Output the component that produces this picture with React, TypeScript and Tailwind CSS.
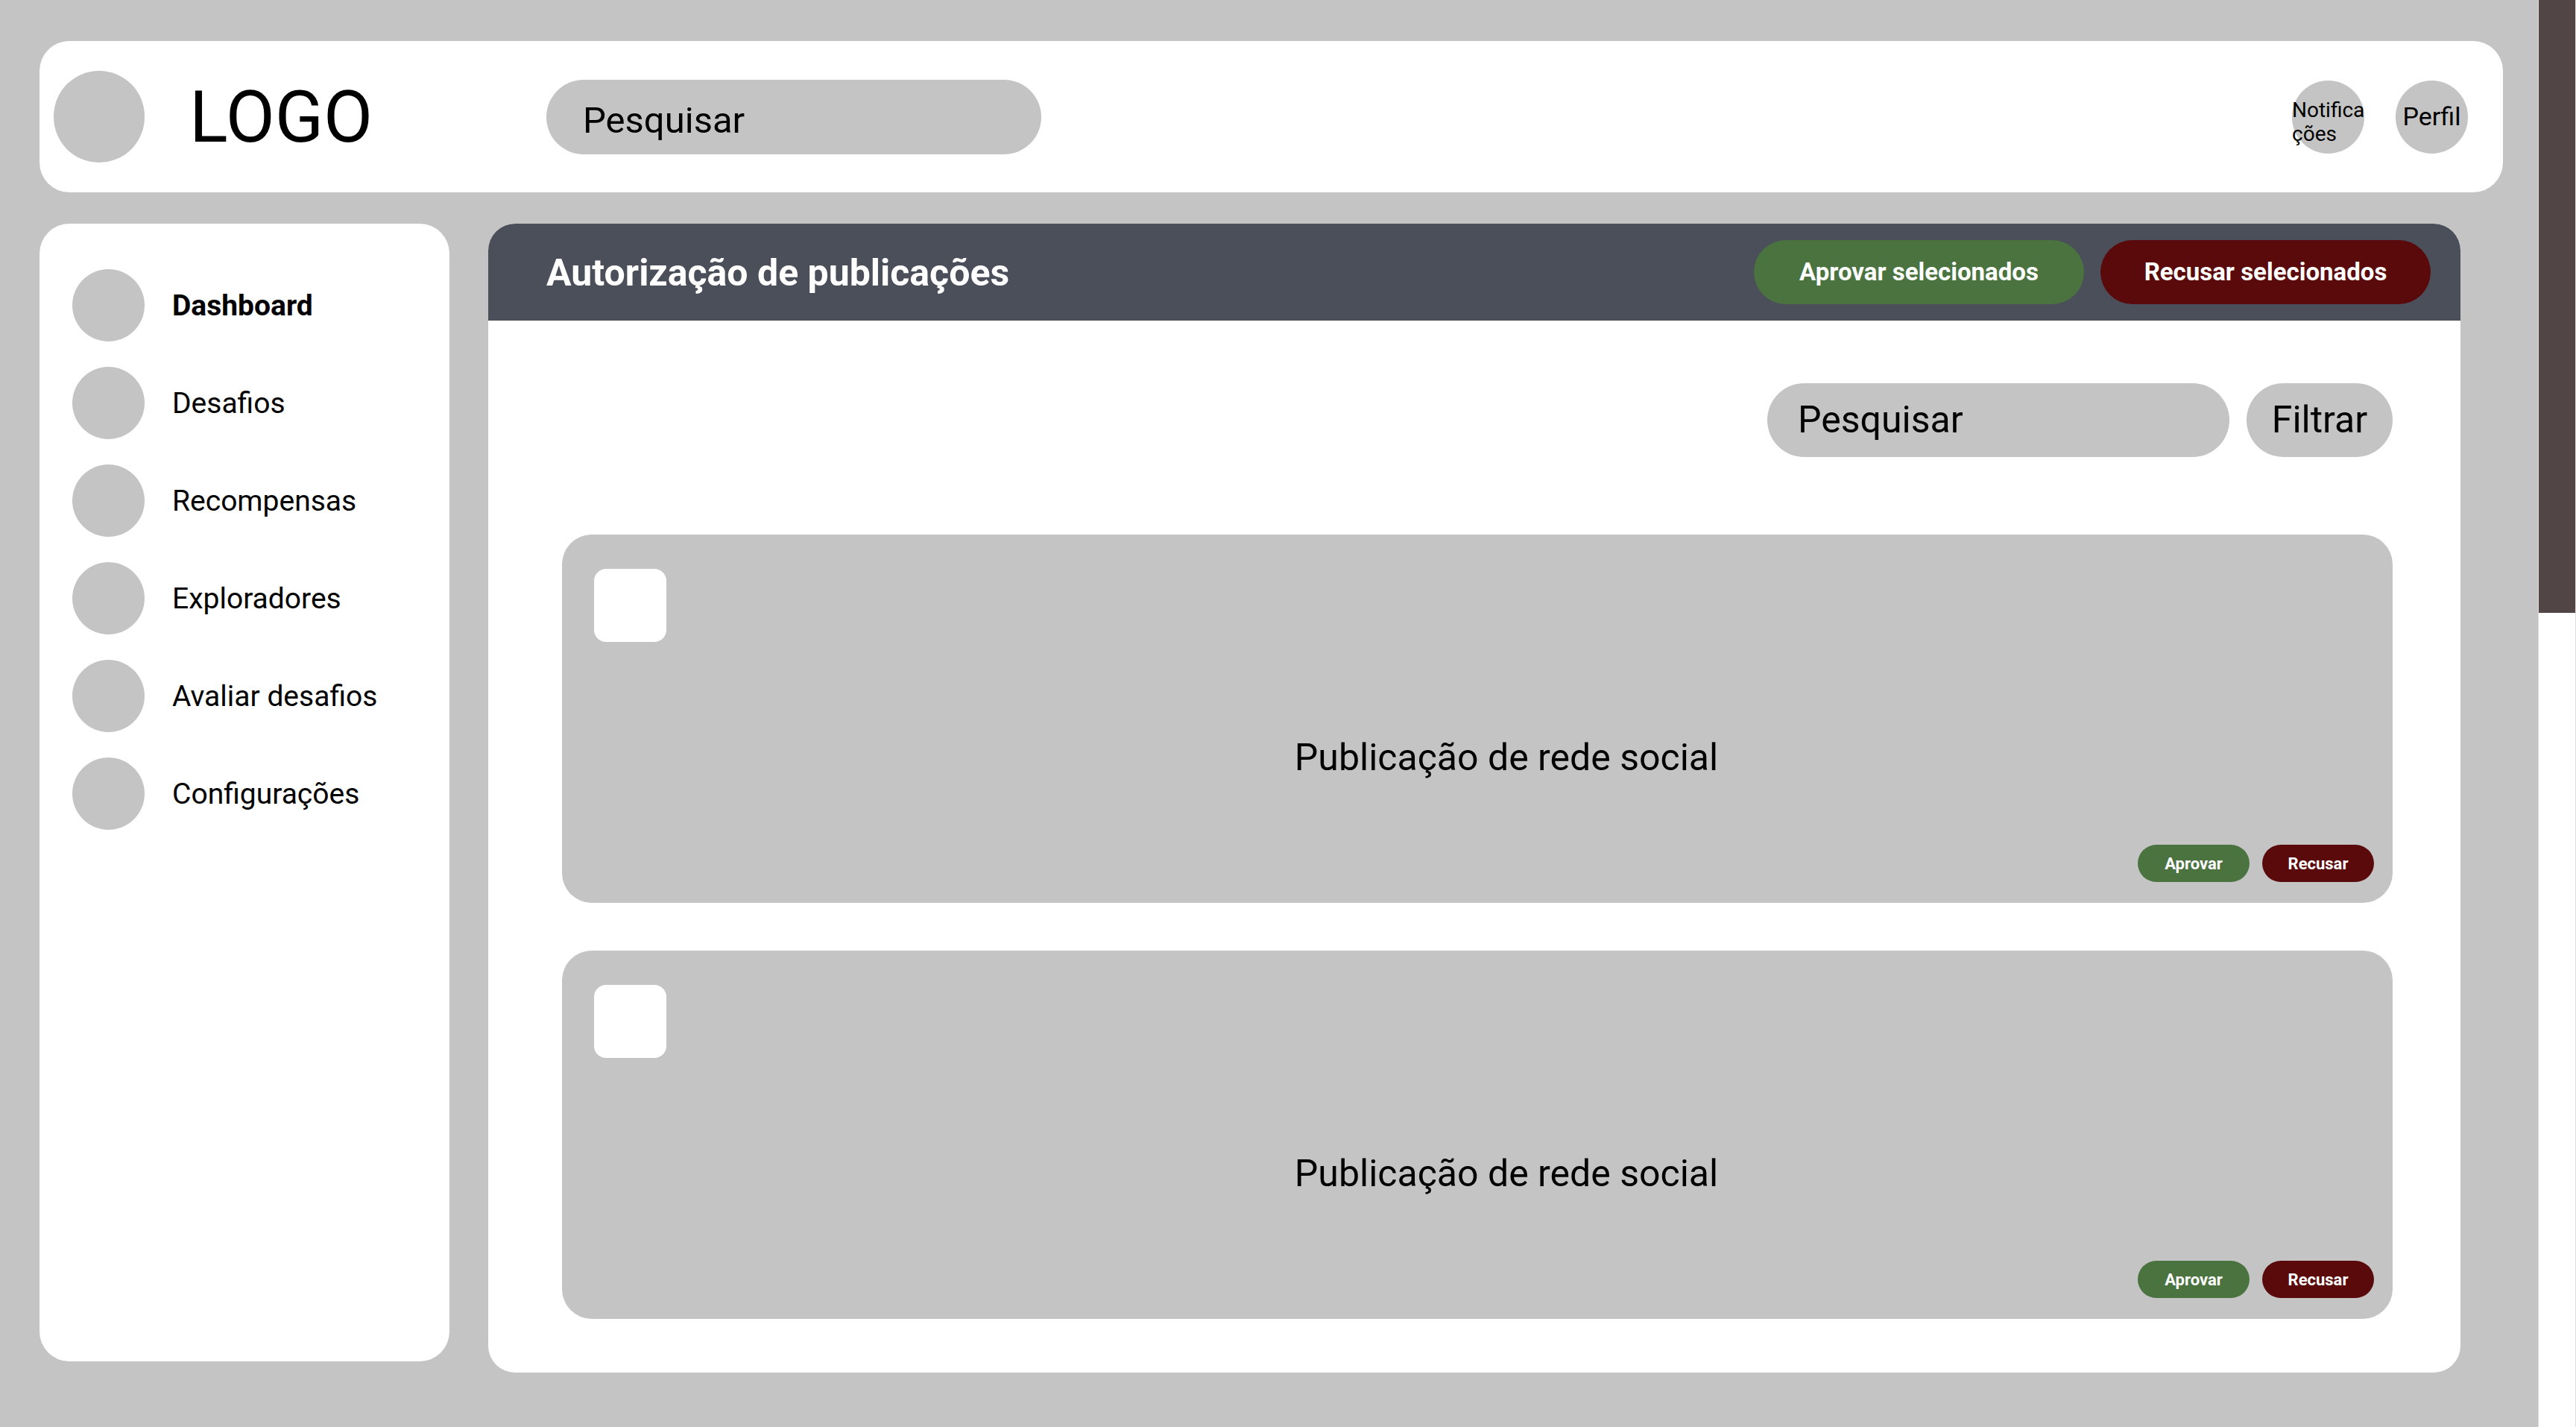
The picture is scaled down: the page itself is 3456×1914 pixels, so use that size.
const menu = [
  { label: "Dashboard", active: true },
  { label: "Desafios" },
  { label: "Recompensas" },
  { label: "Exploradores" },
  { label: "Avaliar desafios" },
  { label: "Configurações" },
];

function PostCard() {
  return (
    <div className="flex h-[494px] flex-col rounded-[40px] bg-[#c4c4c4] pb-[28px] pl-[43px] pr-[25px] pt-[46px]">
      <div className="h-[98px] w-[97px] rounded-[16px] bg-white" />
      <p className="mt-[126px] pl-[60px] text-center text-[50px] leading-[58px] text-black">
        Publicação de rede social
      </p>
      <div className="mt-auto flex justify-end gap-[17px]">
        <button className="h-[50px] w-[150px] rounded-full bg-[#4a7340] text-[22px] font-bold text-white">
          Aprovar
        </button>
        <button className="h-[50px] w-[150px] rounded-full bg-[#5a0a0b] text-[22px] font-bold text-white">
          Recusar
        </button>
      </div>
    </div>
  );
}

export default function App() {
  return (
    <div className="flex h-[1914px] w-[3456px] overflow-hidden bg-[#c4c4c4] font-['Roboto',sans-serif] text-black">
      <div className="flex-1 pl-[53px] pr-[47px] pt-[55px]">
        {/* top bar */}
        <header className="flex h-[203px] items-center rounded-[40px] bg-white pl-[19px] pr-[47px]">
          <div className="h-[123px] w-[122px] rounded-full bg-[#c4c4c4]" />
          <div className="ml-[60px] w-[479px] text-[96px] leading-none">LOGO</div>
          <div className="flex h-[100px] w-[664px] items-center rounded-full bg-[#c4c4c4] pl-[49px] pt-[10px] text-[49px]">
            Pesquisar
          </div>
          <div className="ml-auto flex items-center gap-[42px]">
            <div className="flex h-[98px] w-[97px] flex-col justify-center rounded-full bg-[#c4c4c4] pt-[14px] text-[28px] leading-[32px] whitespace-nowrap">
              <span>Notifica</span>
              <span>ções</span>
            </div>
            <div className="flex h-[98px] w-[97px] items-center justify-center rounded-full bg-[#c4c4c4] text-[34px]">
              Perfil
            </div>
          </div>
        </header>

        <div className="mt-[42px] flex gap-[52px]">
          {/* sidebar */}
          <nav className="flex h-[1526px] w-[550px] flex-col gap-[34px] rounded-[40px] bg-white pl-[44px] pt-[61px]">
            {menu.map((item) => (
              <div key={item.label} className="flex items-center gap-[37px]">
                <div className="h-[97px] w-[97px] rounded-full bg-[#c4c4c4]" />
                <span className={`pt-[2px] text-[39px] ${item.active ? "font-bold" : ""}`}>{item.label}</span>
              </div>
            ))}
          </nav>

          {/* main panel */}
          <section className="h-[1541px] w-[2646px] overflow-hidden rounded-[36px] bg-white">
            <div className="flex h-[130px] items-center justify-between bg-[#4a4f59] pl-[78px] pr-[40px]">
              <h1 className="pt-[2px] text-[50px] font-bold text-white">Autorização de publicações</h1>
              <div className="flex gap-[22px]">
                <button className="h-[86px] w-[443px] rounded-full bg-[#4a7340] text-[33px] font-bold text-white">
                  Aprovar selecionados
                </button>
                <button className="h-[86px] w-[443px] rounded-full bg-[#5a0a0b] text-[33px] font-bold text-white">
                  Recusar selecionados
                </button>
              </div>
            </div>

            <div className="pl-[99px] pr-[91px] pt-[84px]">
              <div className="flex justify-end gap-[23px]">
                <div className="flex h-[99px] w-[620px] items-center rounded-full bg-[#c4c4c4] pl-[41px] text-[50px]">
                  Pesquisar
                </div>
                <div className="flex h-[99px] w-[196px] items-center justify-center rounded-full bg-[#c4c4c4] text-[50px]">
                  Filtrar
                </div>
              </div>

              <div className="mt-[104px] flex flex-col gap-[64px]">
                <PostCard />
                <PostCard />
              </div>
            </div>
          </section>
        </div>
      </div>

      {/* scrollbar */}
      <div className="w-[51px] border-x border-[#dcdcdc] bg-white">
        <div className="h-[822px] bg-[#524545]" />
      </div>
    </div>
  );
}
